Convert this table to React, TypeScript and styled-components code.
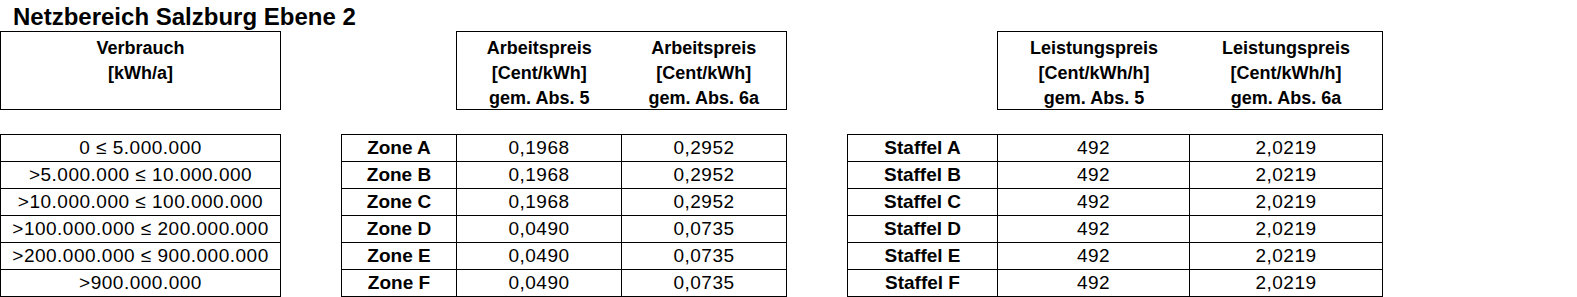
import styled, { createGlobalStyle } from 'styled-components'

const GlobalStyle = createGlobalStyle`
  html, body {
    margin: 0;
    padding: 0;
    background: #fff;
  }
  body {
    font-family: "Liberation Sans", Arial, sans-serif;
    color: #000;
  }
`

const rows = [
  { range: '0 ≤ 5.000.000', zone: 'Zone A', a5: '0,1968', a6: '0,2952', staffel: 'Staffel A', l5: '492', l6: '2,0219' },
  { range: '>5.000.000 ≤ 10.000.000', zone: 'Zone B', a5: '0,1968', a6: '0,2952', staffel: 'Staffel B', l5: '492', l6: '2,0219' },
  { range: '>10.000.000 ≤ 100.000.000', zone: 'Zone C', a5: '0,1968', a6: '0,2952', staffel: 'Staffel C', l5: '492', l6: '2,0219' },
  { range: '>100.000.000 ≤ 200.000.000', zone: 'Zone D', a5: '0,0490', a6: '0,0735', staffel: 'Staffel D', l5: '492', l6: '2,0219' },
  { range: '>200.000.000 ≤ 900.000.000', zone: 'Zone E', a5: '0,0490', a6: '0,0735', staffel: 'Staffel E', l5: '492', l6: '2,0219' },
  { range: '>900.000.000', zone: 'Zone F', a5: '0,0490', a6: '0,0735', staffel: 'Staffel F', l5: '492', l6: '2,0219' },
]

function App() {
  return (
    <Page>
      <GlobalStyle />
      <Title>Netzbereich Salzburg Ebene 2</Title>
      <Blocks>
        <Block>
          <HeaderBox $offset={0} $width={281} $cols={1}>
            <HeaderCell>
              <span>Verbrauch</span>
              <span>[kWh/a]</span>
            </HeaderCell>
          </HeaderBox>
          <Grid $cols="280px">
            {rows.map(r => (
              <Cell key={r.range}>{r.range}</Cell>
            ))}
          </Grid>
        </Block>

        <Block>
          <HeaderBox $offset={115} $width={331} $cols={2}>
            <HeaderCell>
              <span>Arbeitspreis</span>
              <span>[Cent/kWh]</span>
              <span>gem. Abs. 5</span>
            </HeaderCell>
            <HeaderCell>
              <span>Arbeitspreis</span>
              <span>[Cent/kWh]</span>
              <span>gem. Abs. 6a</span>
            </HeaderCell>
          </HeaderBox>
          <Grid $cols="115px 165px 165px">
            {rows.map(r => (
              <Row key={r.zone}>
                <Cell $bold>{r.zone}</Cell>
                <Cell>{r.a5}</Cell>
                <Cell>{r.a6}</Cell>
              </Row>
            ))}
          </Grid>
        </Block>

        <Block>
          <HeaderBox $offset={150} $width={386} $cols={2}>
            <HeaderCell>
              <span>Leistungspreis</span>
              <span>[Cent/kWh/h]</span>
              <span>gem. Abs. 5</span>
            </HeaderCell>
            <HeaderCell>
              <span>Leistungspreis</span>
              <span>[Cent/kWh/h]</span>
              <span>gem. Abs. 6a</span>
            </HeaderCell>
          </HeaderBox>
          <Grid $cols="150px 192px 193px">
            {rows.map(r => (
              <Row key={r.staffel}>
                <Cell $bold>{r.staffel}</Cell>
                <Cell>{r.l5}</Cell>
                <Cell>{r.l6}</Cell>
              </Row>
            ))}
          </Grid>
        </Block>
      </Blocks>
    </Page>
  )
}

export default App

const Page = styled.div`
  width: 1577px;
  height: 297px;
  overflow: hidden;
  display: flex;
  flex-direction: column;
`

const Title = styled.h1`
  margin: 0;
  height: 31px;
  padding-left: 13px;
  font-size: 24px;
  font-weight: bold;
  line-height: 33px;
  white-space: nowrap;
`

const Blocks = styled.div`
  display: flex;
  align-items: flex-start;
  gap: 60px;
`

const Block = styled.div`
  display: flex;
  flex-direction: column;
  gap: 24px;
`

const HeaderBox = styled.div<{ $offset: number; $width: number; $cols: number }>`
  box-sizing: border-box;
  margin-left: ${p => p.$offset}px;
  width: ${p => p.$width}px;
  height: 79px;
  padding-top: 4px;
  border: 1px solid #000;
  display: grid;
  grid-template-columns: repeat(${p => p.$cols}, 1fr);
  align-items: start;
`

const HeaderCell = styled.div`
  display: flex;
  flex-direction: column;
  align-items: center;
  font-size: 18px;
  font-weight: bold;
  line-height: 25px;
  white-space: nowrap;
`

const Grid = styled.div<{ $cols: string }>`
  display: grid;
  grid-template-columns: ${p => p.$cols};
  width: fit-content;
  border-top: 1px solid #000;
  border-left: 1px solid #000;
`

const Row = styled.div`
  display: contents;
`

const Cell = styled.div<{ $bold?: boolean }>`
  box-sizing: border-box;
  height: 27px;
  border-right: 1px solid #000;
  border-bottom: 1px solid #000;
  font-size: 19px;
  font-weight: ${p => (p.$bold ? 'bold' : 'normal')};
  letter-spacing: ${p => (p.$bold ? '0' : '0.5px')};
  line-height: 26px;
  text-align: center;
  white-space: nowrap;
`
